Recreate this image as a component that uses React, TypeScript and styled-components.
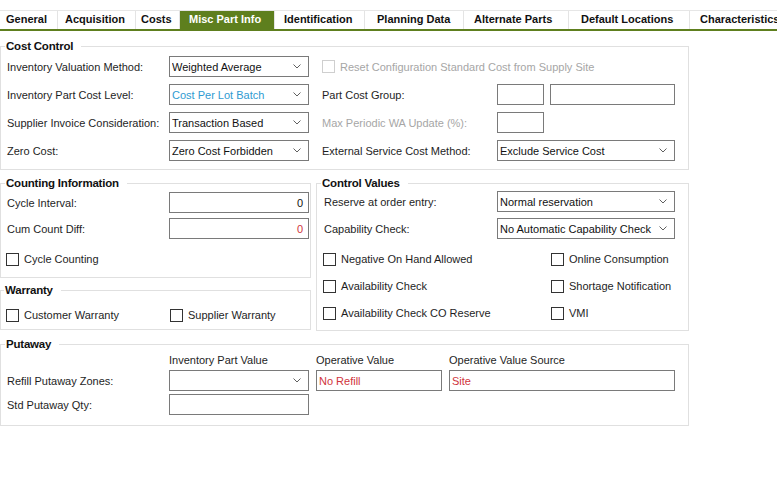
import styled, { createGlobalStyle } from "styled-components";

const GlobalStyle = createGlobalStyle`
  body {
    margin: 0;
    background: #fff;
    font-family: "Liberation Sans", Arial, sans-serif;
    font-size: 11px;
    color: #1e1e1e;
  }
`;

const Page = styled.div`
  width: 777px;
  padding-top: 10px;
  overflow: hidden;
`;

const TabBar = styled.div`
  display: flex;
  white-space: nowrap;
  overflow: hidden;
  border-top: 1px solid #e6e6e6;
  border-bottom: 2px solid #5e7f1e;
`;

const Tab = styled.div<{ $w: number; $pl: number; $active?: boolean }>`
  flex: 0 0 ${(p) => p.$w}px;
  height: 18px;
  box-sizing: border-box;
  display: flex;
  align-items: center;
  padding: 0 0 2px ${(p) => p.$pl}px;
  border-right: 1px solid #e4e4e4;
  font-weight: bold;
  font-size: 11px;
  background: ${(p) => (p.$active ? "#5e7f1e" : "#fff")};
  color: ${(p) => (p.$active ? "#fff" : "#111")};
`;

const Content = styled.div`
  width: 689px;
  margin-top: 8px;
  display: flex;
  flex-direction: column;
  gap: 6px;
`;

const MidRow = styled.div`
  display: grid;
  grid-template-columns: 311px 373px;
  column-gap: 5px;
`;

const LeftStack = styled.div`
  display: flex;
  flex-direction: column;
  gap: 5px;
`;

const Group = styled.fieldset<{ $pad: string }>`
  margin: 0;
  min-width: 0;
  box-sizing: border-box;
  border: 1px solid #e0e0e0;
  padding: ${(p) => p.$pad};
`;

const GroupTitle = styled.legend`
  padding: 0 8px 0 1px;
  margin-left: -2px;
  font-weight: bold;
  font-size: 11.5px;
  letter-spacing: -0.2px;
  line-height: 14px;
  color: #111;
`;

const FormGrid = styled.div<{ $cols: string; $rows: string; $rowGap?: number; $colGap?: number }>`
  display: grid;
  grid-template-columns: ${(p) => p.$cols};
  grid-template-rows: ${(p) => p.$rows};
  row-gap: ${(p) => p.$rowGap ?? 7}px;
  column-gap: ${(p) => p.$colGap ?? 0}px;
  align-items: center;
`;

const Label = styled.div<{ $muted?: boolean; $indent?: number }>`
  padding-left: ${(p) => p.$indent ?? 0}px;
  color: ${(p) => (p.$muted ? "#a6a6a6" : "#1e1e1e")};
  white-space: nowrap;
`;

const Field = styled.div<{ $w?: number; $tone?: "blue" | "red"; $right?: boolean }>`
  box-sizing: border-box;
  width: ${(p) => (p.$w ? `${p.$w}px` : "100%")};
  height: 21px;
  border: 1px solid #7a7a7a;
  background: #fff;
  display: flex;
  align-items: center;
  padding: 0 5px 0 2px;
  justify-content: ${(p) => (p.$right ? "flex-end" : "flex-start")};
  color: ${(p) =>
    p.$tone === "blue" ? "#2f9bd1" : p.$tone === "red" ? "#d0343c" : "#111"};
  white-space: nowrap;
  overflow: hidden;
`;

const FieldText = styled.span`
  flex: 1;
  overflow: hidden;
`;

const Pair = styled.div`
  display: flex;
  gap: 6px;
`;

const Header = styled.div`
  color: #1e1e1e;
  white-space: nowrap;
`;

const CheckRow = styled.label<{ $muted?: boolean; $shift?: number }>`
  display: flex;
  align-items: center;
  height: 18px;
  margin-left: ${(p) => p.$shift ?? 0}px;
  color: ${(p) => (p.$muted ? "#a6a6a6" : "#1e1e1e")};
  white-space: nowrap;
`;

const Box = styled.span<{ $muted?: boolean }>`
  box-sizing: border-box;
  width: 13px;
  height: 13px;
  border: 1px solid ${(p) => (p.$muted ? "#cfcfcf" : "#333")};
  background: #fff;
  margin-right: 5px;
  flex: none;
`;

const Checks = styled.div<{ $cols: string }>`
  display: grid;
  grid-template-columns: ${(p) => p.$cols};
  row-gap: 9px;
`;

function Select({ value, tone, w }: { value: string; tone?: "blue" | "red"; w?: number }) {
  return (
    <Field $tone={tone} $w={w}>
      <FieldText>{value}</FieldText>
      <svg width="8" height="5" viewBox="0 0 8 5" style={{ marginRight: 2 }}>
        <path d="M0.5 0.5 L4 4 L7.5 0.5" fill="none" stroke="#606060" strokeWidth="1" />
      </svg>
    </Field>
  );
}

function Check({ label, muted, shift }: { label: string; muted?: boolean; shift?: number }) {
  return (
    <CheckRow $muted={muted} $shift={shift}>
      <Box $muted={muted} />
      {label}
    </CheckRow>
  );
}

// name, width, left padding of the label
const tabs: [string, number, number][] = [
  ["General", 58, 6],
  ["Acquisition", 78, 7],
  ["Costs", 44, 5],
  ["Misc Part Info", 95, 9],
  ["Identification", 90, 9],
  ["Planning Data", 99, 12],
  ["Alternate Parts", 105, 10],
  ["Default Locations", 121, 12],
  ["Characteristics", 120, 10],
];

export default function App() {
  return (
    <Page>
      <GlobalStyle />
      <TabBar>
        {tabs.map(([name, w, pl]) => (
          <Tab key={name} $w={w} $pl={pl} $active={name === "Misc Part Info"}>
            {name}
          </Tab>
        ))}
      </TabBar>
      <Content>
        <Group $pad="3px 0 8px 6px">
          <GroupTitle>Cost Control</GroupTitle>
          <FormGrid $cols="162px 140px 188px 178px" $rows="repeat(4, 21px)">
            <Label>Inventory Valuation Method:</Label>
            <Select value="Weighted Average" />
            <div style={{ gridColumn: "3 / 5" }}>
              <Check label="Reset Configuration Standard Cost from Supply Site" muted shift={13} />
            </div>
            <Label>Inventory Part Cost Level:</Label>
            <Select value="Cost Per Lot Batch" tone="blue" />
            <Label $indent={13}>Part Cost Group:</Label>
            <Pair>
              <Field $w={47} />
              <Field $w={126} />
            </Pair>
            <Label>Supplier Invoice Consideration:</Label>
            <Select value="Transaction Based" />
            <Label $indent={13} $muted>
              Max Periodic WA Update (%):
            </Label>
            <Field $w={47} />
            <Label>Zero Cost:</Label>
            <Select value="Zero Cost Forbidden" />
            <Label $indent={13}>External Service Cost Method:</Label>
            <Select value="Exclude Service Cost" />
          </FormGrid>
        </Group>

        <MidRow>
          <LeftStack>
            <Group $pad="2px 0 9px 6px">
              <GroupTitle>Counting Information</GroupTitle>
              <FormGrid $cols="162px 140px" $rows="21px 21px" $rowGap={5}>
                <Label>Cycle Interval:</Label>
                <Field $right>0</Field>
                <Label>Cum Count Diff:</Label>
                <Field $right $tone="red">
                  0
                </Field>
              </FormGrid>
              <div style={{ marginTop: 11 }}>
                <Check label="Cycle Counting" shift={-1} />
              </div>
            </Group>
            <Group $pad="9px 0 5px 5px">
              <GroupTitle>Warranty</GroupTitle>
              <Checks $cols="164px 1fr">
                <Check label="Customer Warranty" />
                <Check label="Supplier Warranty" />
              </Checks>
            </Group>
          </LeftStack>

          <Group $pad="1px 0 8px 6px">
            <GroupTitle>Control Values</GroupTitle>
            <FormGrid $cols="174px 178px" $rows="21px 21px" $rowGap={6}>
              <Label $indent={1}>Reserve at order entry:</Label>
              <Select value="Normal reservation" />
              <Label $indent={1}>Capability Check:</Label>
              <Select value="No Automatic Capability Check" />
            </FormGrid>
            <div style={{ marginTop: 11 }}>
              <Checks $cols="228px 1fr">
                <Check label="Negative On Hand Allowed" />
                <Check label="Online Consumption" />
                <Check label="Availability Check" />
                <Check label="Shortage Notification" />
                <Check label="Availability Check CO Reserve" />
                <Check label="VMI" />
              </Checks>
            </div>
          </Group>
        </MidRow>

        <Group $pad="2px 0 10px 6px">
          <GroupTitle>Putaway</GroupTitle>
          <FormGrid $cols="155px 140px 126px 226px" $rows="14px 21px 21px" $rowGap={3} $colGap={7}>
            <div />
            <Header>Inventory Part Value</Header>
            <Header>Operative Value</Header>
            <Header>Operative Value Source</Header>
            <Label>Refill Putaway Zones:</Label>
            <Select value="" />
            <Field $tone="red">No Refill</Field>
            <Field $tone="red">Site</Field>
            <Label>Std Putaway Qty:</Label>
            <Field />
          </FormGrid>
        </Group>
      </Content>
    </Page>
  );
}
